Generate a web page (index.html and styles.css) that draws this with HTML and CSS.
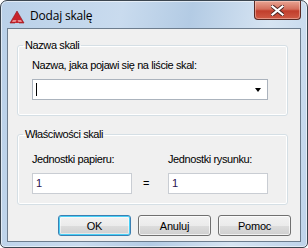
FILE: index.html
```html
<!DOCTYPE html>
<html lang="pl">
<head>
  <meta charset="UTF-8" />
  <title>Dodaj skalę</title>
  <link rel="stylesheet" href="styles.css">
</head>
<body>
  <div class="window">
    <div class="titlebar">
      <svg class="app-icon" width="16" height="16" viewBox="0 0 16 16">
        <polygon points="8,2 15,14 10,14 8,10.5 6,14 1,14" fill="#c8242c" stroke="#8e1117" stroke-width="0.6"/>
        <polygon points="4,11 12,11 13,13 3,13" fill="#f0a0a4" opacity="0.8"/>
        <polygon points="8,10 10,14 6,14" fill="#c8242c"/>
      </svg>
      <span class="title">Dodaj skalę</span>
      <div class="close-btn">
        <svg width="13" height="11" viewBox="0 0 13 11">
          <path d="M1.5 1.5 L11.5 9.5 M11.5 1.5 L1.5 9.5" stroke="#4a2320" stroke-width="4" stroke-linecap="square"/>
          <path d="M1.5 1.5 L11.5 9.5 M11.5 1.5 L1.5 9.5" stroke="#ffffff" stroke-width="2.2" stroke-linecap="square"/>
        </svg>
      </div>
    </div>

    <div class="client">
      <fieldset class="group group-name">
        <legend>Nazwa skali</legend>
        <div class="label">Nazwa, jaka pojawi się na liście skal:</div>
        <div class="combo">
          <span class="caret"></span>
          <span class="drop-arrow"></span>
        </div>
      </fieldset>

      <fieldset class="group group-props">
        <legend>Właściwości skali</legend>
        <div class="units">
          <div class="unit-col">
            <div class="label">Jednostki papieru:</div>
            <div class="textbox">1</div>
          </div>
          <div class="equals">=</div>
          <div class="unit-col">
            <div class="label">Jednostki rysunku:</div>
            <div class="textbox">1</div>
          </div>
        </div>
      </fieldset>

      <div class="buttons">
        <button class="btn btn-default">OK</button>
        <button class="btn">Anuluj</button>
        <button class="btn">Pomoc</button>
      </div>
    </div>
  </div>
</body>
</html>
```

FILE: styles.css
```css
* { margin: 0; padding: 0; box-sizing: border-box; }
body {
  background: #ffffff;
  font-family: 'Liberation Sans', Arial, sans-serif;
  font-size: 11px;
  letter-spacing: -0.4px;
  color: #000;
}

.window {
  width: 308px;
  height: 248px;
  border: 1px solid #3c4650;
  border-radius: 7px 7px 5px 5px;
  background: linear-gradient(100deg, #b9d0e8 0%, #c9dbee 35%, #b3cbe4 55%, #d6e4f2 78%, #bed3ea 100%);
  box-shadow: inset 0 0 0 1px rgba(255,255,255,0.55);
  display: flex;
  flex-direction: column;
  overflow: hidden;
}

/* pasek tytułu */
.titlebar {
  height: 27px;
  display: flex;
  align-items: flex-start;
}
.app-icon { margin: 8px 0 0 8px; }
.title {
  margin: 7px 0 0 5px;
  font-family: 'Open Sans', sans-serif;
  font-size: 12px;
  letter-spacing: -0.2px;
  line-height: 16px;
  color: #000;
}
.close-btn {
  margin-left: auto;
  margin-right: 6px;
  width: 47px;
  height: 19px;
  border: 1px solid #5a2a24;
  border-top: none;
  border-radius: 0 0 4px 4px;
  background: linear-gradient(#e8a493 0%, #d46f5c 45%, #c13e2c 55%, #cf5a45 100%);
  box-shadow: inset 0 0 0 1px rgba(255,220,210,0.45);
  display: flex;
  align-items: center;
  justify-content: center;
}

/* obszar klienta */
.client {
  flex: 1;
  margin: 0 6px 5px 6px;
  border: 1px solid #6d7d8e;
  background: #f0f0f0;
  display: flex;
  flex-direction: column;
}

.group {
  margin: 10px 12px 0 9px;
  border: 1px solid #d5dfe5;
  border-radius: 3px;
  box-shadow: inset 0 0 0 1px #ffffff;
  min-width: 0;
}
.group legend {
  margin-left: -9px;
  padding: 0 2px;
  line-height: 13px;
  color: #000;
}
.group-name { padding: 7px 19px 15px 14px; }
.group-props { margin-top: 12px; padding: 12px 19px 10px 14px; }

.label { line-height: 13px; margin-bottom: 7px; }

.combo {
  width: 236px;
  height: 21px;
  background: #fff;
  border: 1px solid #abb3bd;
  display: flex;
  align-items: center;
  padding: 0 6px 0 3px;
}
.caret { width: 1px; height: 13px; background: #000; }
.drop-arrow {
  margin-left: auto;
  width: 0; height: 0;
  border-left: 3.5px solid transparent;
  border-right: 3.5px solid transparent;
  border-top: 4px solid #000;
}

.units { display: flex; align-items: flex-end; }
.unit-col { width: 100px; }
.equals { width: 36px; height: 21px; line-height: 21px; padding-left: 11px; }
.textbox {
  width: 100px;
  height: 21px;
  background: #fff;
  border: 1px solid #c9cdd3;
  line-height: 19px;
  padding-left: 3px;
  color: #2a1250;
}

.buttons {
  margin-top: 10px;
  padding-right: 9px;
  display: flex;
  justify-content: flex-end;
  gap: 7px;
}
.btn {
  width: 73px;
  height: 21px;
  border: 1px solid #707070;
  border-radius: 3px;
  background: linear-gradient(#f2f2f2 0%, #ebebeb 50%, #dddddd 51%, #cfcfcf 100%);
  box-shadow: inset 0 0 0 1px rgba(255,255,255,0.7);
  font-family: 'Liberation Sans', Arial, sans-serif;
  font-size: 11px;
  letter-spacing: -0.2px;
  color: #000;
}
.btn-default {
  border-color: #3c7fb1;
  box-shadow: inset 0 0 0 1px #48d0f7, inset 0 0 0 2px rgba(255,255,255,0.5);
}
```
